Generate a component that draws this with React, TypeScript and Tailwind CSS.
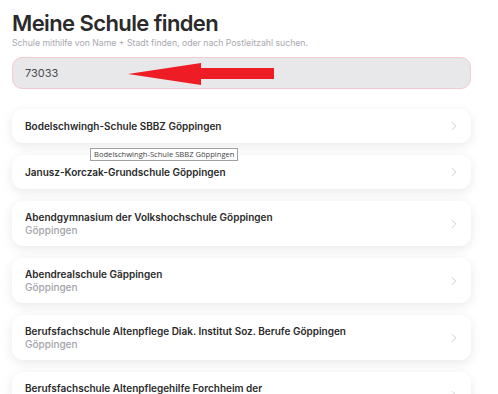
import { ChevronRight } from 'lucide-react'

const schools = [
  { name: 'Bodelschwingh-Schule SBBZ Göppingen' },
  { name: 'Janusz-Korczak-Grundschule Göppingen' },
  { name: 'Abendgymnasium der Volkshochschule Göppingen', city: 'Göppingen' },
  { name: 'Abendrealschule Gäppingen', city: 'Göppingen' },
  { name: 'Berufsfachschule Altenpflege Diak. Institut Soz. Berufe Göppingen', city: 'Göppingen' },
  { name: 'Berufsfachschule Altenpflegehilfe Forchheim der', city: 'Göppingen' },
]

export default function App() {
  return (
    <div className="w-[498px] h-[394px] overflow-hidden bg-white" style={{ fontFamily: 'Inter, "Noto Sans", sans-serif' }}>
      <div className="pl-3 pr-[27px] pt-[10px]">
        {/* Header */}
        <h1 className="text-[22px] leading-[27px] font-semibold text-[#2a2a2a] tracking-[-0.6px]">Meine Schule finden</h1>
        <p className="text-[8.7px] leading-[11px] text-[#a8a8ae] mt-[1px]">
          Schule mithilfe von Name + Stadt finden, oder nach Postleitzahl suchen.
        </p>

        {/* Search input with annotation arrow */}
        <div className="relative mt-[8px] h-[32px] rounded-[10px] bg-[#e8e8ea] border border-[#f7c9d2] flex items-center pl-3">
          <span className="text-[11px] text-[#4a4a4a]">73033</span>
          <svg className="absolute left-[115px] top-[4px]" width="147" height="24" viewBox="0 0 147 24">
            <polygon points="0,12 73,1 73,6 146,6 146,17 73,17 73,23" fill="#ee1c25" />
          </svg>
        </div>

        {/* Results */}
        <div className="mt-[20px] flex flex-col gap-3">
          {schools.map((s) => (
            <div
              key={s.name}
              className={`bg-white rounded-[11px] shadow-[0_3px_12px_rgba(0,0,0,0.09)] flex items-center justify-between pl-[13px] pr-[10px] ${s.city ? 'h-[45px]' : 'h-[34px]'}`}
            >
              <div className="flex flex-col">
                <span className="text-[10px] leading-[13px] font-semibold text-[#2a2a2a]">{s.name}</span>
                {s.city && <span className="text-[10px] leading-[13px] font-medium text-[#a3a3aa]">{s.city}</span>}
              </div>
              <ChevronRight size={14} color="#bdbdc2" strokeWidth={1.3} />
            </div>
          ))}
        </div>
      </div>

      {/* Tooltip */}
      <div className="absolute left-[90px] top-[148px] h-[13px] px-[3px] bg-white border border-[#a0a0a0] flex items-center">
        <span className="text-[7.6px] text-[#444]" style={{ fontFamily: '"Open Sans", sans-serif' }}>
          Bodelschwingh-Schule SBBZ Göppingen
        </span>
      </div>
    </div>
  )
}
